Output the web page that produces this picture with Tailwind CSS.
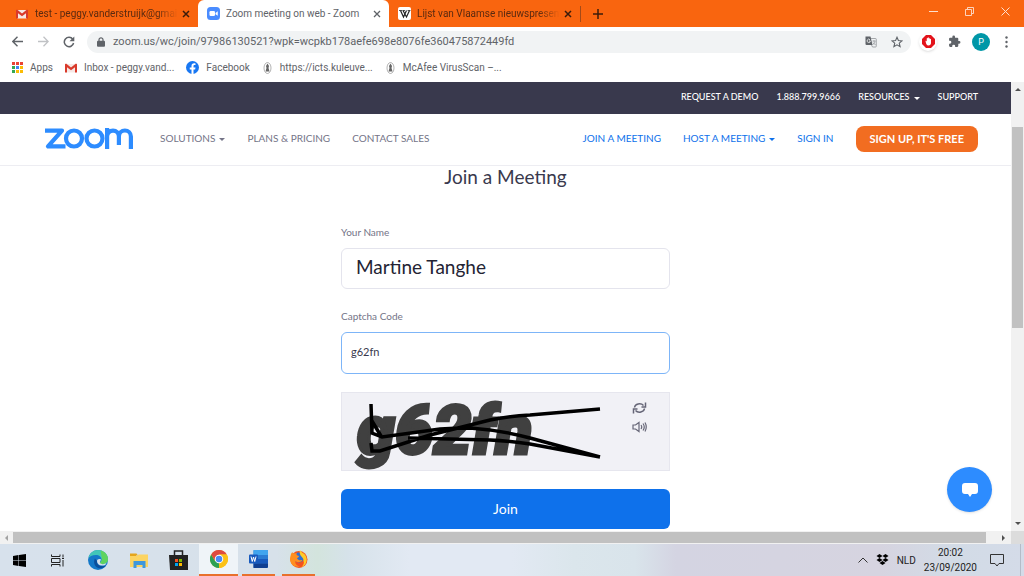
<!DOCTYPE html>
<html lang="en">
<head>
    <meta charset="UTF-8">
    <meta name="viewport" content="width=device-width, initial-scale=1.0">
    <title>Zoom meeting on web - Zoom</title>
    <script src="https://cdn.jsdelivr.net/npm/@tailwindcss/browser@4"></script>
</head>
<body class="flex flex-col h-screen overflow-hidden bg-white font-[Roboto,sans-serif] text-[#5f6368]">

    <!-- Tab strip -->
    <header class="flex shrink-0 h-[27px] bg-[#f9650f] text-[10px] text-[#5a2a10]">
        <div class="flex items-center w-[198px] pl-4 pr-1">
            <svg class="w-3 h-3 shrink-0 mr-[7px]" viewBox="0 0 24 24"><path fill="#f6e9e6" d="M2 4h20v17H2z"/><path fill="#d93a2b" d="M0 4.500 2 3l10 8 10-8 2 1.500V21h-4V10.500l-8 6-8-6V21H0z"/></svg>
            <button class="flex-1 min-w-0 overflow-hidden whitespace-nowrap text-left mask-r-from-85%">test - peggy.vanderstruijk@gmai</button>
            <button aria-label="Close tab" class="p-1 text-[#3b1c0b]"><svg class="w-2 h-2" viewBox="0 0 8 8" fill="none" stroke="currentColor" stroke-width="1.500"><path d="M1 1l6 6M7 1l-6 6"/></svg></button>
        </div>
        <div class="flex items-center w-[191px] pl-[9px] pr-1 bg-white rounded-t-md text-[#5f6368]">
            <svg class="w-[13px] h-[13px] shrink-0 mr-1.5" viewBox="0 0 26 26"><rect width="26" height="26" rx="7" fill="#4a8cff"/><rect x="5" y="8" width="11" height="10" rx="2.500" fill="#fff"/><path fill="#fff" d="M17 12l4.500-3.500v9L17 14.500z"/></svg>
            <button class="flex-1 min-w-0 overflow-hidden whitespace-nowrap text-left">Zoom meeting on web - Zoom</button>
            <button aria-label="Close tab" class="p-1"><svg class="w-2 h-2" viewBox="0 0 8 8" fill="none" stroke="currentColor" stroke-width="1.300"><path d="M1 1l6 6M7 1l-6 6"/></svg></button>
        </div>
        <div class="flex items-center w-[192px] pl-[9px]">
            <svg class="w-[13px] h-[13px] shrink-0 mr-1.5" viewBox="0 0 26 26"><rect width="26" height="26" rx="4" fill="#fff"/><path fill="none" stroke="#222" stroke-width="2.400" d="M5 7l6 13 6-13M10 7l7 13 6-13"/><path stroke="#222" stroke-width="1.500" d="M2 7h6m1 0h5m5 0h6"/></svg>
            <button class="flex-1 min-w-0 overflow-hidden whitespace-nowrap text-left mask-r-from-85%">Lijst van Vlaamse nieuwspresenta</button>
            <button aria-label="Close tab" class="p-1 text-[#3b1c0b]"><svg class="w-2 h-2" viewBox="0 0 8 8" fill="none" stroke="currentColor" stroke-width="1.500"><path d="M1 1l6 6M7 1l-6 6"/></svg></button>
            <span class="w-px h-4 ml-1 bg-[#a34a18]"></span>
        </div>
        <button aria-label="New tab" class="px-3 text-[#3b1c0b]"><svg class="w-2.5 h-2.5" viewBox="0 0 10 10" fill="none" stroke="currentColor" stroke-width="1.500"><path d="M5 0v10M0 5h10"/></svg></button>
        <div class="flex items-start gap-[27px] ml-auto pt-[7px] pr-[14px] text-[#fde0cf]">
            <button aria-label="Minimize"><svg class="w-[9px] h-[9px]" viewBox="0 0 9 9" stroke="currentColor"><path d="M0 4.500h9"/></svg></button>
            <button aria-label="Restore"><svg class="w-[9px] h-[9px]" viewBox="0 0 9 9" fill="none" stroke="currentColor" stroke-width=".9"><path d="M.5 2.500h6v6h-6zM2.500 2V.5h6v6H7"/></svg></button>
            <button aria-label="Close"><svg class="w-[9px] h-[9px]" viewBox="0 0 9 9" stroke="currentColor"><path d="M.5.5l8 8M8.500.5l-8 8"/></svg></button>
        </div>
    </header>

    <!-- Toolbar -->
    <div class="flex items-center shrink-0 h-[29px] pl-3 pr-4">
        <button aria-label="Back" class="mr-[15px]"><svg class="w-[11px] h-[11px]" viewBox="0 0 11 11" fill="none" stroke="#5f6368" stroke-width="1.400"><path d="M11 5.500H1M5.500.7.800 5.500l4.700 4.800"/></svg></button>
        <button aria-label="Forward" class="mr-[14px]"><svg class="w-[11px] h-[11px]" viewBox="0 0 11 11" fill="none" stroke="#c0c2c5" stroke-width="1.300"><path d="M0 5.500h10M5.500.7l4.700 4.800-4.700 4.800"/></svg></button>
        <button aria-label="Reload" class="mr-3"><svg class="w-3 h-3" viewBox="0 0 12 12"><path fill="none" stroke="#5f6368" stroke-width="1.500" d="M9.800 3.200A4.700 4.700 0 1 0 10.600 7"/><path fill="#5f6368" d="M11.300.5v4.800H6.500z"/></svg></button>
        <div class="flex items-center flex-1 h-[22px] pl-2.5 pr-2 rounded-full bg-[#f1f3f4]">
            <svg class="w-2 h-2.5 mr-2 shrink-0" viewBox="0 0 8 10"><path fill="none" stroke="#5f6368" stroke-width="1.200" d="M2 5V2.800a2 2 0 0 1 4 0V5"/><rect y="3.800" width="8" height="6" rx="1" fill="#5f6368"/></svg>
            <input type="text" aria-label="Address" value="zoom.us/wc/join/97986130521?wpk=wcpkb178aefe698e8076fe360475872449fd" class="flex-1 min-w-0 text-[11px] leading-4 text-[#5f6368]">
            <button aria-label="Translate" class="mr-3.5"><svg class="w-3 h-3" viewBox="0 0 24 24"><path fill="#5f6368" d="M1 1h10l4 17H3a2 2 0 0 1-2-2z"/><path fill="none" stroke="#8a8d91" stroke-width="1.500" d="M12 5h9a1.500 1.500 0 0 1 1.500 1.500v14A1.500 1.500 0 0 1 21 22h-6l-2-4M15 10h6m-3-1v2m2 0c-1 4-3 5-5 6m1-4 5 5"/><path fill="none" stroke="#fff" stroke-width="1.500" d="M10 7.500A3.300 3.300 0 1 0 10.800 10H8"/></svg></button>
            <button aria-label="Bookmark"><svg class="w-3 h-3" viewBox="0 0 24 24" fill="none" stroke="#5f6368" stroke-width="2.200"><path d="M12 2.500l2.800 6.600 7.200.6-5.500 4.700 1.700 7L12 17.700l-6.200 3.700 1.700-7L2 9.700l7.200-.6z"/></svg></button>
        </div>
        <button aria-label="AdBlock" class="flex items-center justify-center w-[18px] h-[18px] ml-2 rounded-full bg-white shadow"><svg class="w-[13px] h-[13px]" viewBox="0 0 26 26"><path fill="#e3131b" d="M8 0h10l8 8v10l-8 8H8l-8-8V8z"/><path fill="#fff" d="M7 12c1-1 2.500 0 2.500 1.500V7c0-1.500 2-1.500 2 0V5.500c0-1.500 2-1.500 2 0V7c0-1.500 2-1.500 2 0v1.500c0-1.500 2.500-1.500 2.500 0V16c0 3-2 5-5 5-4 0-5-4-6-9z"/></svg></button>
        <button aria-label="Extensions" class="ml-[11px]"><svg class="w-[13px] h-[13px]" viewBox="0 0 24 24"><path fill="#5f6368" d="M20.500 11H19V7a2 2 0 0 0-2-2h-4V3.500a2.500 2.500 0 0 0-5 0V5H4a2 2 0 0 0-2 2v3.800h1.500a2.700 2.700 0 0 1 0 5.400H2V20a2 2 0 0 0 2 2h3.800v-1.500a2.700 2.700 0 0 1 5.400 0V22H17a2 2 0 0 0 2-2v-4h1.500a2.500 2.500 0 0 0 0-5z"/></svg></button>
        <button aria-label="Profile" class="w-[18px] h-[18px] ml-[11px] rounded-full bg-[#0097a7] text-[9px] leading-[18px] text-white">P</button>
        <button aria-label="Menu" class="ml-[15px]"><svg class="w-[3px] h-3" viewBox="0 0 3 12" fill="#5f6368"><circle cx="1.500" cy="1.500" r="1.200"/><circle cx="1.500" cy="6" r="1.200"/><circle cx="1.500" cy="10.500" r="1.200"/></svg></button>
    </div>

    <!-- Bookmarks -->
    <nav class="flex items-center gap-3 shrink-0 h-[26px] pl-3 pb-[3px] text-[10px] whitespace-nowrap">
        <a href="#" class="flex items-center gap-[7px]">
            <svg class="w-[11px] h-[11px]" viewBox="0 0 11 11"><path fill="#ea4335" d="M0 0h3v3H0zM4 0h3v3H4zM8 0h3v3H8z"/><path fill="#34a853" d="M0 4h3v3H0zM0 8h3v3H0z"/><path fill="#4285f4" d="M4 4h3v3H4z"/><path fill="#fbbc05" d="M8 4h3v3H8zM4 8h3v3H4zM8 8h3v3H8z"/></svg>Apps</a>
        <a href="#" class="flex items-center gap-[7px]">
            <svg class="w-3 h-3" viewBox="0 0 24 24"><path fill="#f6e9e6" d="M2 4h20v17H2z"/><path fill="#d93a2b" d="M0 4.500 2 3l10 8 10-8 2 1.500V21h-4V10.500l-8 6-8-6V21H0z"/></svg>Inbox - peggy.vand...</a>
        <a href="#" class="flex items-center gap-[7px]">
            <svg class="w-[13px] h-[13px]" viewBox="0 0 26 26"><circle cx="13" cy="13" r="13" fill="#1877f2"/><path fill="#fff" d="M11 26v-9H7.500v-4H11v-3c0-3.500 2-5.500 5.200-5.500 1.500 0 2.800.3 2.800.3v3.300h-1.700C15.500 8.100 15 9.200 15 10.200V13h4l-.7 4H15v9z"/></svg>Facebook</a>
        <a href="#" class="flex items-center gap-[7px]">
            <svg class="w-[11px] h-3" viewBox="0 0 22 24"><ellipse cx="11" cy="12" rx="7" ry="11" fill="#fff" stroke="#999" stroke-width="1.500"/><path fill="#666" d="M11 3l3 5-1 4 2 7H7l2-7-1-4z"/></svg>https://icts.kuleuve...</a>
        <a href="#" class="flex items-center gap-[7px]">
            <svg class="w-[11px] h-3" viewBox="0 0 22 24"><ellipse cx="11" cy="12" rx="7" ry="11" fill="#fff" stroke="#999" stroke-width="1.500"/><path fill="#666" d="M11 3l3 5-1 4 2 7H7l2-7-1-4z"/></svg>McAfee VirusScan –...</a>
    </nav>

    <!-- Page -->
    <div class="flex flex-1 min-h-0">
        <div class="relative flex-1 min-w-0 overflow-hidden font-[Lato,sans-serif] text-[#747487]">
            <nav class="flex items-center justify-end gap-[18px] h-8 pr-[33px] pb-0.5 bg-[#39394d] text-[9px] font-medium text-white">
                <a href="#">REQUEST A DEMO</a>
                <a href="#">1.888.799.9666</a>
                <a href="#" class="flex items-center gap-1">RESOURCES <svg class="w-1.5 h-[3px] mt-0.5" viewBox="0 0 6 3" fill="currentColor"><path d="M0 0h6L3 3z"/></svg></a>
                <a href="#">SUPPORT</a>
            </nav>
            <nav class="flex items-center h-[52px] pl-[45px] pr-[33px] pb-0.5 border-b border-[#ededf2] text-[10px]">
                <a href="#" aria-label="Zoom" class="mr-[27px]">
                    <svg class="w-[88px] h-[21px]" viewBox="0 0 88 21" fill="none" stroke="#2d8cff" stroke-width="4.200"><path stroke-linejoin="round" d="M0 2.600h17L3 18.400h17.500"/><circle cx="29" cy="10.500" r="8"/><circle cx="49.500" cy="10.500" r="8"/><path d="M62.100 21V8.500a5.800 5.800 0 0 1 11.800 0V17m0-8.500a5.900 5.900 0 0 1 12 0V21M62.100 0v10"/></svg>
                </a>
                <div class="flex items-center gap-[22px]">
                    <a href="#" class="flex items-center gap-1">SOLUTIONS <svg class="w-1.5 h-[3px] mt-0.5" viewBox="0 0 6 3" fill="currentColor"><path d="M0 0h6L3 3z"/></svg></a>
                    <a href="#">PLANS &amp; PRICING</a>
                    <a href="#">CONTACT SALES</a>
                </div>
                <div class="flex items-center gap-[22px] ml-auto text-[#0e71eb]">
                    <a href="#">JOIN A MEETING</a>
                    <a href="#" class="flex items-center gap-1">HOST A MEETING <svg class="w-1.5 h-[3px] mt-0.5" viewBox="0 0 6 3" fill="currentColor"><path d="M0 0h6L3 3z"/></svg></a>
                    <a href="#">SIGN IN</a>
                    <a href="#" class="px-[14px] rounded-lg bg-[#f26d21] text-[11px] leading-[26px] font-bold text-white">SIGN UP, IT'S FREE</a>
                </div>
            </nav>

            <form class="w-full max-w-[329px] mx-auto">
                <h1 class="text-center text-[19px] leading-[22px] text-[#39394d]">Join a Meeting</h1>
                <label for="name" class="block mt-9 mb-2 text-[10px] leading-4">Your Name</label>
                <input id="name" type="text" value="Martine Tanghe" class="block w-full h-[41px] px-[14px] pb-1 border border-[#e4e4ed] rounded-md text-[19px] text-[#232333]">
                <label for="captcha" class="block mt-[19px] mb-2 text-[10px] leading-4">Captcha Code</label>
                <input id="captcha" type="text" value="g62fn" class="block w-full h-[42px] px-[9px] pb-1 border border-[#7db5f8] rounded-md text-[11px] text-[#39394d]">
                <div class="flex items-start h-[79px] mt-[18px] border border-[#e6e6ee] bg-[#f1f1f6]">
                    <svg class="w-[270px] h-[77px]" viewBox="0 0 270 77" role="img" aria-label="Captcha">
                        <text x="15" y="61" fill="#404040" stroke="#404040" stroke-width="3" font-family="Roboto" font-size="68" font-weight="900" font-style="italic">g62fn</text>
                        <path fill="none" stroke="#000" stroke-width="3.500" d="M29 11l1 29 10 4 58-8q15-1 30-1 30 2 60 10l70 19M30 28l9 15M29 50l1 8h8l50-16 60-15q20-4 40-5l70-6M66 45l82 2q20 1 40 4l70 13"/>
                    </svg>
                    <div class="flex flex-col gap-[7px] pt-[9px] ml-5 text-[#666677]">
                        <button type="button" aria-label="Refresh captcha"><svg class="w-[15px] h-3" viewBox="0 0 30 24" fill="none" stroke="currentColor" stroke-width="3"><path d="M5 11a10 8 0 0 1 18-4M25 13a10 8 0 0 1-18 4M27 1v9h-8M3 23v-9h8"/></svg></button>
                        <button type="button" aria-label="Play audio captcha"><svg class="w-[15px] h-3" viewBox="0 0 30 24" fill="none" stroke="currentColor" stroke-width="2.400"><path d="M2 8h5l7-5v18l-7-5H2zM18 8q3 4 0 8M22 5q5 7 0 14M26 3q5 9 0 18"/></svg></button>
                    </div>
                </div>
                <button type="submit" class="block w-full h-10 pb-0.5 mt-[18px] rounded-md bg-[#0e71eb] text-[14px] text-white">Join</button>
            </form>

            <button aria-label="Chat" class="absolute right-[19px] bottom-[19px] flex items-center justify-center w-[45px] h-[45px] rounded-full bg-[#2d8cff] shadow"><svg class="w-4 h-[14px]" viewBox="0 0 16 14" fill="#fff"><path d="M3 0h10a3 3 0 0 1 3 3v5a3 3 0 0 1-3 3h-3l-2 3-2-3H3a3 3 0 0 1-3-3V3a3 3 0 0 1 3-3z"/></svg></button>
        </div>
        <div class="flex flex-col items-center w-[13px] bg-[#f1f1f1]">
            <svg class="w-1.5 h-[3px] mt-1.5 mb-[36px]" viewBox="0 0 6 3" fill="#505050"><path d="M0 3h6L3 0z"/></svg>
            <span class="w-[11px] h-[201px] bg-[#c1c1c1]"></span>
            <svg class="w-1.5 h-[3px] mt-auto mb-1.5" viewBox="0 0 6 3" fill="#505050"><path d="M0 0h6L3 3z"/></svg>
        </div>
    </div>
    <div class="flex items-center shrink-0 h-[13px] bg-[#f1f1f1]">
        <svg class="w-[3px] h-1.5 mx-[5px]" viewBox="0 0 3 6" fill="#a3a3a3"><path d="M3 0v6L0 3z"/></svg>
        <span class="flex-1 h-[11px] bg-[#c1c1c1]"></span>
        <svg class="w-[3px] h-1.5 ml-4 mr-[6px]" viewBox="0 0 3 6" fill="#505050"><path d="M0 0v6l3-3z"/></svg>
        <span class="w-[13px] h-full bg-[#dcdcdc]"></span>
    </div>

    <!-- Taskbar -->
    <footer class="flex shrink-0 h-8 bg-[linear-gradient(90deg,#d7e1ec_0%,#d7e1ea_27%,#d3e4dd_31%,#d6e2ea_34%,#e2e9f3_40%,#e2e9f3_50%,#dbe6ec_56%,#d9e4eb_62%,#d4d4e2_66%,#d6d4e0_86%,#d2dbe6_93%,#d4dbe8_100%)] text-[10px] text-[#222]">
        <button aria-label="Start" class="w-[38px] flex items-center justify-center"><svg class="w-[13px] h-[13px]" viewBox="0 0 26 26" fill="#000"><path d="M0 4l11-2v10.500H0zM12 1.800 26 0v12.500H12zM0 13.500h11V24L0 22zM12 13.500h14V26l-14-1.800z"/></svg></button>
        <button aria-label="Task view" class="w-[39px] flex items-center justify-center"><svg class="w-[13px] h-[13px]" viewBox="0 0 26 26" fill="none" stroke="#222" stroke-width="2"><path d="M1 1v4h17V1M1 25v-4h17v4M1 9h17v8H1zM24 1v6M24 12v13M22 9h4"/></svg></button>
        <button aria-label="Edge" class="w-[42px] flex items-center justify-center"><svg class="w-5 h-5" viewBox="0 0 40 40"><circle cx="20" cy="20" r="20" fill="#1478c8"/><path fill="#42c6b8" d="M1 16C3 6 11 0 20 0c12 0 20 9 20 18 0 7-5 10-11 10-4 0-5-1-5-2 0-2 3-3 3-7 0-5-5-9-11-9C8 10 3 13 1 16z"/><path fill="#5fd35e" d="M25 1c9 2 15 9 15 17 0 7-5 10-11 10-4 0-5-1-5-2 0-2 4-3 4-8z"/><path fill="#0b4f9c" d="M14 17c-4 7-1 17 7 19 6 2 12-1 15-5-12 4-19-2-18-9z"/><path fill="#d9e2ea" d="M18 22c0-3 4-5 8-3-1 3-3 5-2 7 2 3 9 3 13 0-2 5-5 5-9 5-6 0-10-4-10-9z"/></svg></button>
        <button aria-label="File Explorer" class="w-[39px] flex items-center justify-center"><svg class="w-[18px] h-[15px]" viewBox="0 0 36 30"><path fill="#e5a51c" d="M0 1h13l3 4h-4v6H0z"/><path fill="#fcd462" d="M0 6h14l3-3h19v25H0z"/><path fill="#3f97dc" d="M7 30V16h24v14h-6v-6H13v6z"/></svg></button>
        <button aria-label="Microsoft Store" class="w-[41px] flex items-center justify-center"><svg class="w-[19px] h-5" viewBox="0 0 38 40"><path fill="none" stroke="#222" stroke-width="3" d="M11 12V2h16v10"/><path fill="#222" d="M0 10h38v30H2z"/><path fill="#f25022" d="M12 18h6v6h-6z"/><path fill="#7fba00" d="M20 18h6v6h-6z"/><path fill="#00a4ef" d="M12 26h6v6h-6z"/><path fill="#ffb900" d="M20 26h6v6h-6z"/></svg></button>
        <button aria-label="Chrome" class="w-[39px] flex items-center justify-center bg-[#eff4f8] border-b-2 border-[#e8702c]"><svg class="w-[18px] h-[18px]" viewBox="0 0 36 36"><circle cx="18" cy="18" r="18" fill="#fbc116"/><path fill="#2da053" d="M18 18v18A18 18 0 0 1 2.400 9L10 22z"/><path fill="#de4b3f" d="M18 9h15.600A18 18 0 0 0 2.400 9l8 13z"/><path fill="#fbc116" d="M18 9h15.600A18 18 0 0 1 18 36l8-14z"/><circle cx="18" cy="18" r="8.500" fill="#fff"/><circle cx="18" cy="18" r="6.500" fill="#4a8af4"/></svg></button>
        <button aria-label="Word" class="w-[33px] ml-1 flex items-center justify-center border-b-2 border-[#e8702c]"><svg class="w-[19px] h-[18px]" viewBox="0 0 38 36"><rect x="9" width="29" height="36" rx="2" fill="#2b7cd3"/><path fill="#41a5ee" d="M9 0h27l2 2v8H9z"/><path fill="#185abd" d="M9 18h29v9H9z"/><path fill="#103f91" d="M9 27h29v7l-2 2H9z"/><rect y="9" width="18" height="18" rx="2" fill="#185abd"/><path fill="none" stroke="#fff" stroke-width="2" d="M4 13l2.500 10L9 14l2.500 9L14 13"/></svg></button>
        <button aria-label="Firefox" class="w-[33px] ml-[7px] flex items-center justify-center border-b-2 border-[#e8702c]"><svg class="w-[18px] h-[18px]" viewBox="0 0 36 36"><circle cx="18" cy="19" r="17" fill="#f4511e"/><circle cx="18" cy="15" r="10" fill="#2f6fd0"/><path fill="#ffca28" d="M20 0c2 5 9 6 12 13 4 9-1 19-9 21 4-4 6-8 4-12 1-7-6-9-7-14-1-3-1-6 0-8z"/><path fill="#ff8f1f" d="M2 8c1-2 2-3 3-4 0 2 1 3 3 3 2-1 4-1 6 0-2 2-1 4 4 5 0 3-4 3-4 5 3 5 8 3 11 3-3 5-10 6-14 2-2 5 3 10 9 11C8 36 0 27 0 19c0-4 1-7 2-11z"/></svg></button>
        <div class="flex items-center ml-auto">
            <button aria-label="Show hidden icons" class="mr-2"><svg class="w-2.5 h-1.5" viewBox="0 0 10 6" fill="none" stroke="#333"><path d="M.5 5.500 5 1l4.500 4.500"/></svg></button>
            <button aria-label="Dropbox" class="mr-2"><svg class="w-[13px] h-3" viewBox="0 0 26 24"><path d="M7 0l6 4-6 4-6-4zM19 0l6 4-6 4-6-4zM7 8l6 4-6 4-6-4zM19 8l6 4-6 4-6-4zM7 18l6-4 6 4-6 4z"/></svg></button>
            <button class="mr-2">NLD</button>
            <button class="mr-[13px] leading-[15px] text-center">20:02<br>23/09/2020</button>
            <button aria-label="Notifications" class="mr-4"><svg class="w-[14px] h-[14px]" viewBox="0 0 14 14" fill="none" stroke="#333"><path d="M.5 1.500h13v9H9l-2 2.500-2-2.500H.5z"/></svg></button>
            <span class="w-px h-full mr-[3px] bg-[#b4bcc8]"></span>
        </div>
    </footer>
</body>
</html>
